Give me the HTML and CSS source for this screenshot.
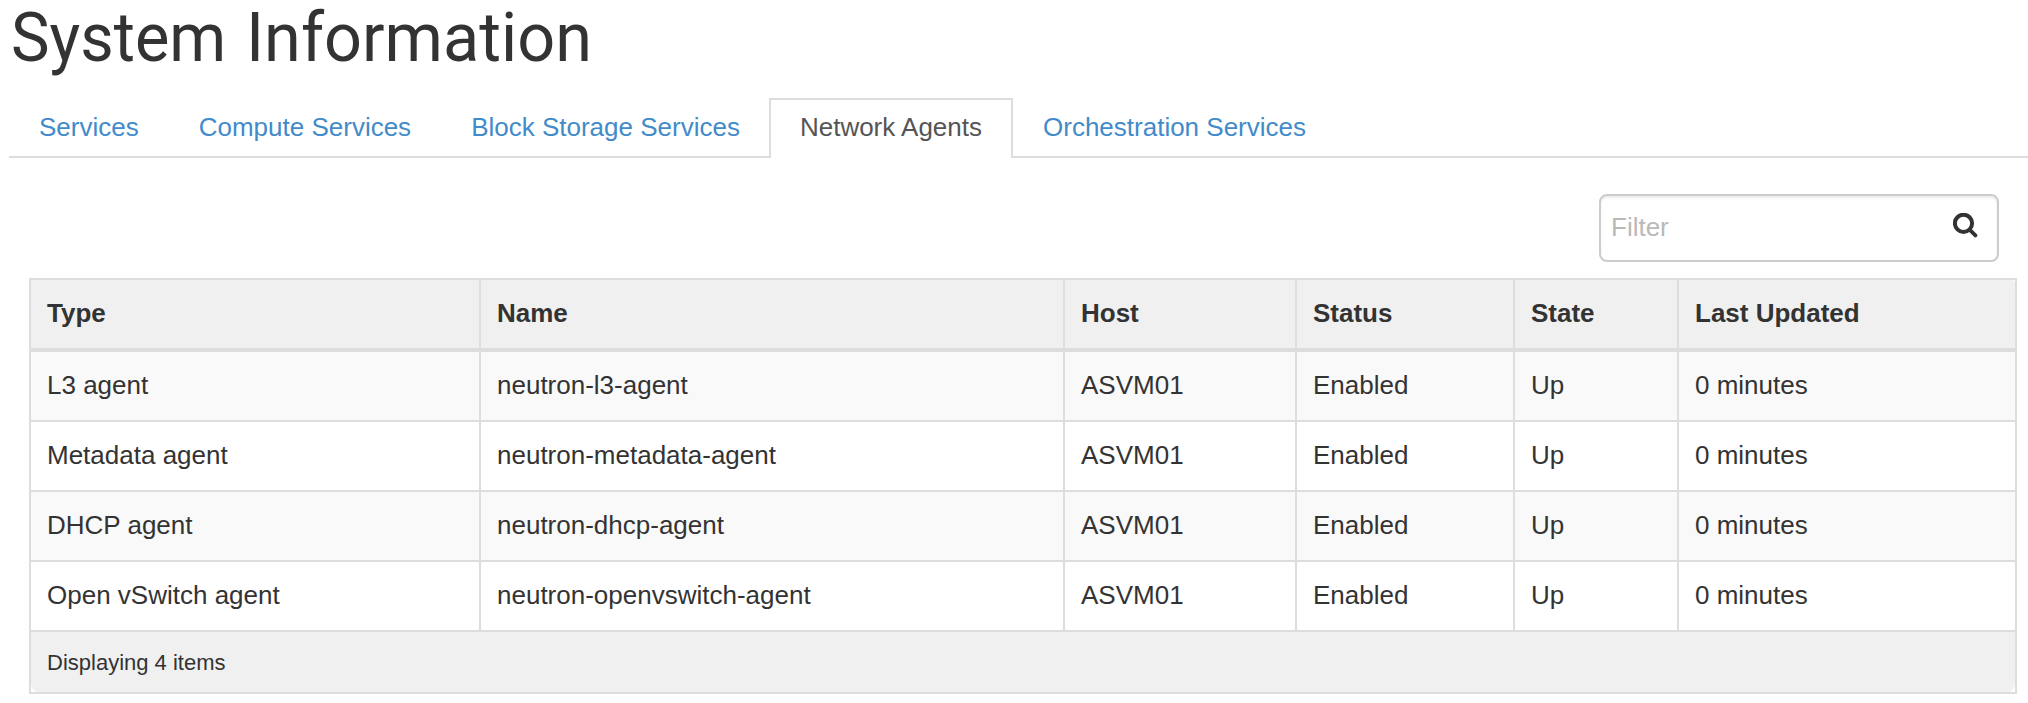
FILE: index.html
```html
<!DOCTYPE html>
<html lang="en">
<head>
<meta charset="utf-8">
<title>System Information</title>
<link rel="stylesheet" href="styles.css">
</head>
<body>
<main class="page">
  <h1 class="page-title"><span class="word word-first">System</span> <span class="word word-second">Information</span></h1>
  <nav class="tabs">
    <a class="tab">Services</a>
    <a class="tab">Compute Services</a>
    <a class="tab">Block Storage Services</a>
    <a class="tab tab-active">Network Agents</a>
    <a class="tab">Orchestration Services</a>
  </nav>
  <div class="toolbar">
    <div class="filter">
      <span class="filter-placeholder">Filter</span>
      <svg class="filter-icon" viewBox="0 0 25 25" width="25" height="25">
        <circle cx="10.5" cy="10.3" r="8.6" fill="none" stroke="#333" stroke-width="4"/>
        <path d="M16.8 16.8L22.4 22.4" stroke="#333" stroke-width="3.8" stroke-linecap="round"/>
      </svg>
    </div>
  </div>
  <div class="table-frame">
    <table class="table">
      <colgroup><col class="c-type"><col class="c-name"><col class="c-host"><col class="c-status"><col class="c-state"><col class="c-updated"></colgroup>
      <thead>
        <tr><th>Type</th><th>Name</th><th>Host</th><th>Status</th><th>State</th><th>Last Updated</th></tr>
      </thead>
      <tbody>
        <tr><td>L3 agent</td><td>neutron-l3-agent</td><td>ASVM01</td><td>Enabled</td><td>Up</td><td>0 minutes</td></tr>
        <tr><td>Metadata agent</td><td>neutron-metadata-agent</td><td>ASVM01</td><td>Enabled</td><td>Up</td><td>0 minutes</td></tr>
        <tr><td>DHCP agent</td><td>neutron-dhcp-agent</td><td>ASVM01</td><td>Enabled</td><td>Up</td><td>0 minutes</td></tr>
        <tr><td>Open vSwitch agent</td><td>neutron-openvswitch-agent</td><td>ASVM01</td><td>Enabled</td><td>Up</td><td>0 minutes</td></tr>
      </tbody>
      <tfoot>
        <tr><td colspan="6">Displaying 4 items</td></tr>
      </tfoot>
    </table>
  </div>
</main>
</body>
</html>
```
FILE: styles.css
```css
* { box-sizing: border-box; }
body {
  margin: 0;
  background: #fff;
  color: #333;
  font: 26px/36px "Liberation Sans", Arial, sans-serif;
  overflow: hidden;
}
.page { padding-left: 9px; }
.page-title {
  display: flex;
  margin: 0;
  height: 98px;
  padding-left: 2px;
  font: 400 69px/76px Roboto, sans-serif;
  white-space: nowrap;
}
.word { transform-origin: 0 0; }
.word-first {
  width: 235px;
  transform: scaleX(.94);
}
.word-second { transform: scaleX(.965); }
.tabs {
  display: flex;
  height: 60px;
  border-bottom: 2px solid #ddd;
}
.tab {
  height: 60px;
  padding: 9px 28px 0;
  border: 2px solid transparent;
  border-bottom: 0;
  color: #428bca;
  white-space: nowrap;
}
.tab-active {
  margin-left: -1px;
  padding: 9px 29px 0;
  border-color: #ddd;
  background: #fff;
  color: #555;
}
.toolbar {
  display: flex;
  justify-content: flex-end;
  padding: 36px 29px 16px 0;
}
.filter {
  display: flex;
  justify-content: space-between;
  width: 400px;
  height: 68px;
  padding: 13px 19px 0 10px;
  border: 2px solid #ccc;
  border-radius: 8px;
  box-shadow: inset 0 2px 2px rgba(0, 0, 0, .075);
}
.filter-placeholder { color: #b9b9b9; }
.filter-icon { margin-top: 4px; }
.table-frame {
  width: 1988px;
  margin-left: 20px;
  border: 2px solid #ddd;
}
.table {
  width: 1984px;
  table-layout: fixed;
  border-collapse: separate;
  border-spacing: 0;
}
.c-type { width: 448px; }
.c-name { width: 584px; }
.c-host { width: 232px; }
.c-status { width: 218px; }
.c-state { width: 164px; }
.c-updated { width: 338px; }
.table th,
.table td {
  height: 70px;
  padding: 0 16px 2px;
  border-bottom: 2px solid #ddd;
  border-left: 2px solid #ddd;
  text-align: left;
  vertical-align: middle;
}
.table th:first-child,
.table td:first-child { border-left: 0; }
.table th {
  height: 72px;
  border-bottom-width: 4px;
  background: #f0f0f0;
}
.table th:last-child { border-top-right-radius: 4px; }
.table tbody tr:nth-child(odd) td { background: #f9f9f9; }
.table tfoot td {
  height: 60px;
  padding: 2px 16px 0;
  border-bottom: 0;
  border-radius: 0 0 8px 8px;
  background: #f0f0f0;
  font-size: 22px;
}
```
